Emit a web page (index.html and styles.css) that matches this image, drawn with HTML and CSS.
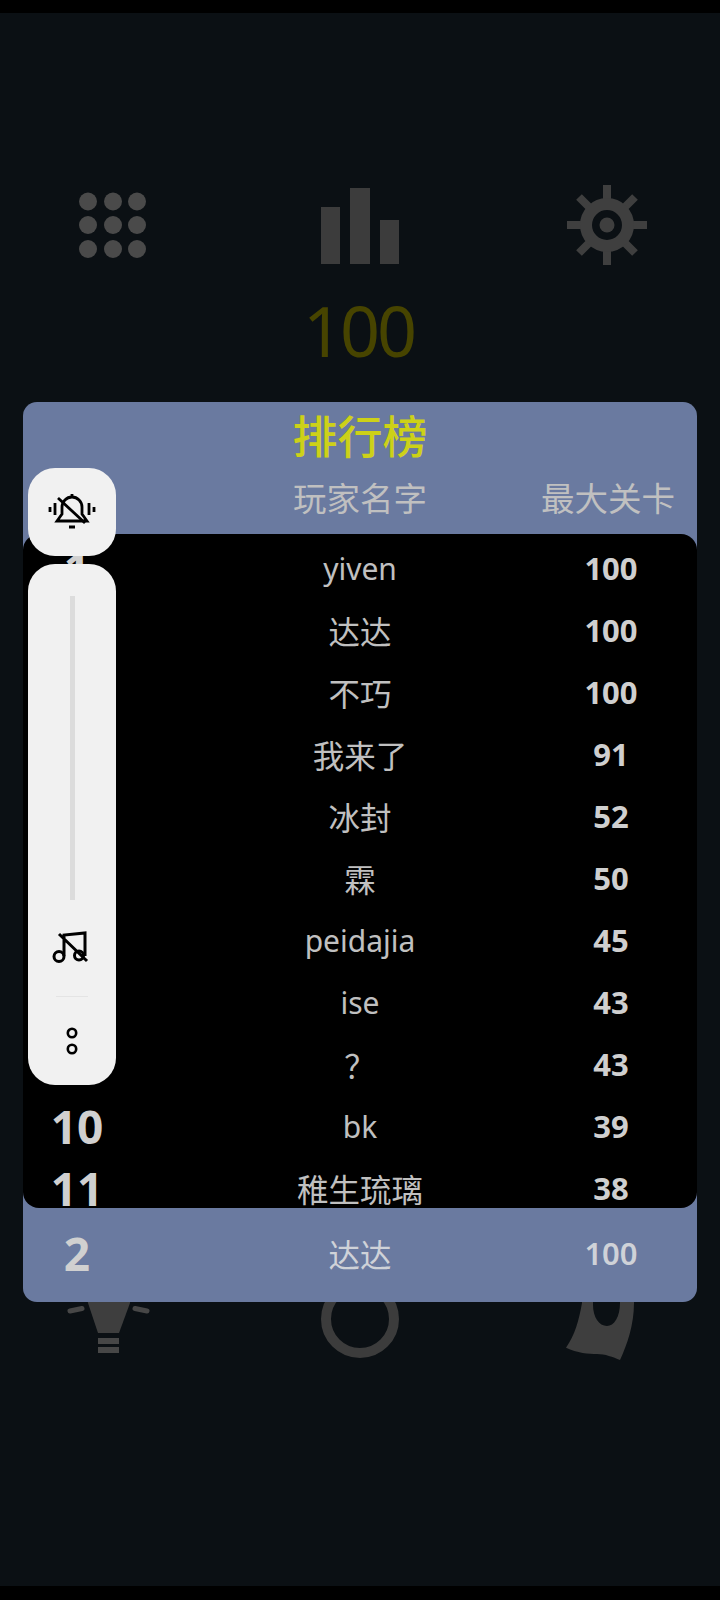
FILE: index.html
```html
<!DOCTYPE html>
<html lang="zh">
<head>
  <meta charset="utf-8">
  <meta name="viewport" content="width=device-width,initial-scale=1">
  <title>排行榜</title>
  <link rel="stylesheet" href="styles.css">
</head>
<body>
  <div class="status-bar"></div>
  <main class="home">
    <div class="icon-row">
      <svg class="icon" viewBox="0 0 80 80" fill="#4a4a4a">
        <circle cx="15" cy="16.500" r="9"/><circle cx="40" cy="16.500" r="9"/><circle cx="64" cy="16.500" r="9"/>
        <circle cx="15" cy="40" r="9"/><circle cx="40" cy="40" r="9"/><circle cx="64" cy="40" r="9"/>
        <circle cx="15" cy="64" r="9"/><circle cx="40" cy="64" r="9"/><circle cx="64" cy="64" r="9"/>
      </svg>
      <svg class="icon" viewBox="0 0 80 80" fill="#3c3c3c">
        <rect x="1" y="22" width="19" height="57"/>
        <rect x="30" y="3" width="20" height="76"/>
        <rect x="60" y="35" width="19" height="44"/>
      </svg>
      <svg class="icon" viewBox="0 0 80 80">
        <path d="M40 0V80M0 40H80M12 12L68 68M68 12L12 68" stroke="#3f3f3f" stroke-width="8"/>
        <circle cx="40" cy="40" r="21" fill="#0b1014" stroke="#3f3f3f" stroke-width="12"/>
        <circle cx="40" cy="40" r="7.500" fill="#3f3f3f"/>
      </svg>
    </div>
    <div class="level">100</div>
    <div class="icon-row icon-row-bottom">
      <svg class="icon" viewBox="0 0 80 80" fill="#3e3e3e">
        <path d="M13 10H58L57 28L46 58H25L15 28Z"/>
        <rect x="25" y="63" width="21" height="6" fill="#474747"/>
        <rect x="25" y="72" width="21" height="6" fill="#474747"/>
        <path d="M-3 36L9 33.500M62 33.500L74 36" stroke="#474747" stroke-width="5" stroke-linecap="round"/>
      </svg>
      <svg class="icon" viewBox="0 0 80 80"><circle cx="40" cy="44" r="34" fill="none" stroke="#3c3c3c" stroke-width="10"/></svg>
      <svg class="icon" viewBox="0 0 80 80" fill="#3e3e3e" fill-rule="evenodd">
        <path d="M15 10V28C12 45 8 60 -1 72.700C10 78 22 79 30 79C38 79 46 82 53 85C60 70 67 50 67 28V10ZM26 10V30C26 42 32 51 40 51C47 51 53 42 53 28V10Z"/>
      </svg>
    </div>
  </main>

  <section class="panel">
    <h1 class="panel-title">排行榜</h1>
    <div class="row row-head">
      <span></span>
      <span>玩家名字</span>
      <span>最大关卡</span>
    </div>
    <div class="list">
      <div class="row"><b class="rank">1</b><span>yiven</span><b>100</b></div>
      <div class="row"><b class="rank">2</b><span class="name-cn">达达</span><b>100</b></div>
      <div class="row"><b class="rank">3</b><span class="name-cn">不巧</span><b>100</b></div>
      <div class="row"><b class="rank">4</b><span class="name-cn">我来了</span><b>91</b></div>
      <div class="row"><b class="rank">5</b><span class="name-cn">冰封</span><b>52</b></div>
      <div class="row"><b class="rank">6</b><span class="name-cn">霖</span><b>50</b></div>
      <div class="row"><b class="rank">7</b><span>peidajia</span><b>45</b></div>
      <div class="row"><b class="rank">8</b><span>ise</span><b>43</b></div>
      <div class="row"><b class="rank">9</b><span class="name-cn">？</span><b>43</b></div>
      <div class="row"><b class="rank">10</b><span>bk</span><b>39</b></div>
      <div class="row"><b class="rank">11</b><span class="name-cn">稚生琉璃</span><b>38</b></div>
    </div>
    <div class="row row-me"><b class="rank">2</b><span class="name-cn">达达</span><em>100</em></div>
  </section>

  <aside class="volume">
    <div class="volume-card volume-bell">
      <svg class="bell" width="46" height="36" viewBox="0 0 46 36" fill="none" stroke="#000" stroke-width="2.800">
        <path d="M13 20V13a10 10 0 0 1 20 0V20L38 27H8Z"/>
        <path d="M23 0V3M20 33h6M9 4L36 29M1 13v5M6 9v12M40 9v12M45 13v5"/>
      </svg>
    </div>
    <div class="volume-card volume-main">
      <div class="volume-track"></div>
      <svg class="volume-music" width="34" height="30" viewBox="0 0 34 30" fill="none" stroke="#000" stroke-width="3">
        <circle cx="4" cy="24.500" r="5"/>
        <circle cx="24" cy="23.500" r="4.500"/>
        <path d="M9 24V3L30 1V24M4 2L32 29"/>
      </svg>
      <div class="volume-line"></div>
      <svg class="volume-dots" width="14" height="28" viewBox="0 0 14 28" fill="none" stroke="#000" stroke-width="2.600">
        <circle cx="7" cy="6" r="4.200"/>
        <circle cx="7" cy="22" r="4.200"/>
      </svg>
    </div>
  </aside>
  <div class="nav-bar"></div>
</body>
</html>
```
FILE: styles.css
```css
html, body {
  padding: 0;
  margin: 0;
}
body {
  position: relative;
  width: 720px;
  height: 1600px;
  overflow: hidden;
  display: flex;
  flex-direction: column;
  background: #0b1014;
  font-family: "Noto Sans", "Noto Sans CJK SC", sans-serif;
}
.status-bar {
  height: 13px;
  background: #000;
}
.nav-bar {
  height: 14px;
  background: #000;
}
.home {
  flex: 1;
  display: flex;
  flex-direction: column;
  padding-top: 172px;
}
.icon-row {
  display: flex;
  justify-content: center;
  gap: 167px;
}
.icon {
  width: 80px;
  height: 80px;
  overflow: visible;
}
.level {
  margin-top: 23px;
  padding-right: 3px;
  text-align: center;
  font-size: 70px;
  line-height: 84px;
  letter-spacing: -3px;
  color: #474400;
}
.icon-row-bottom {
  margin-top: 903px;
}
.panel {
  position: absolute;
  top: 402px;
  left: 23px;
  width: 674px;
  height: 900px;
  display: flex;
  flex-direction: column;
  border-radius: 14px;
  background: #6a7aa0;
  color: #c0c0c0;
}
.panel-title {
  margin: 0;
  height: 70px;
  text-align: center;
  font-size: 45px;
  font-weight: 500;
  line-height: 70px;
  color: #cdd118;
}
.row {
  display: grid;
  grid-template-columns: 172px 1fr 172px;
  align-items: center;
  text-align: center;
  height: 62px;
  flex: none;
  font-size: 30px;
}
.row .rank {
  padding-right: 64px;
  font-size: 46px;
  color: #d0d0d0;
}
.row b {
  font-size: 31px;
  color: #cfcfcf;
}
.row em {
  font-size: 31px;
  font-style: normal;
  font-weight: 600;
}
.name-cn {
  font-size: 31.500px;
}
.row-head {
  height: 62px;
  padding-bottom: 14px;
  box-sizing: border-box;
  font-size: 33.500px;
}
.row-head span:last-child {
  padding-right: 6px;
}
.list {
  height: 674px;
  padding-top: 3px;
  box-sizing: border-box;
  overflow: hidden;
  border-radius: 16px;
  background: #000;
}
.row-me {
  flex: 1;
  padding-bottom: 4px;
  box-sizing: border-box;
  color: #cfd2d8;
}
.volume {
  position: absolute;
  top: 468px;
  left: 28px;
  width: 88px;
  display: flex;
  flex-direction: column;
  gap: 8px;
}
.volume-card {
  display: flex;
  flex-direction: column;
  align-items: center;
  border-radius: 27px;
  background: #f1f1f1;
}
.volume-bell {
  height: 88px;
  justify-content: center;
}
.bell {
  overflow: visible;
}
.volume-main {
  height: 521px;
}
.volume-track {
  width: 5px;
  height: 304px;
  margin-top: 32px;
  background: #dcdcdc;
}
.volume-music {
  margin-top: 32px;
  overflow: visible;
}
.volume-line {
  width: 32px;
  height: 1px;
  margin-top: 34px;
  background: #e4e4e4;
}
.volume-dots {
  margin-top: 30px;
}
```
